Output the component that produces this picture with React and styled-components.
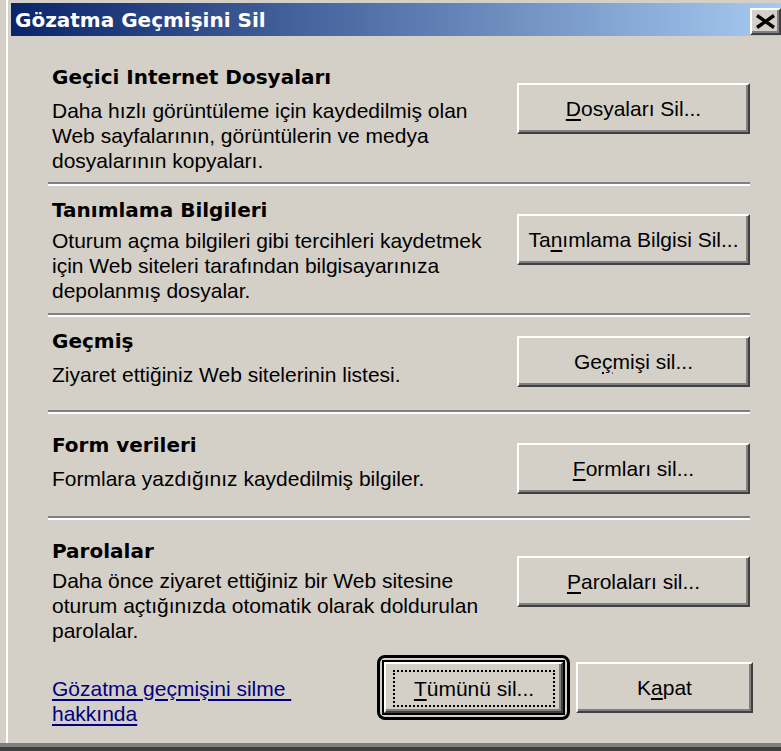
import React from 'react';
import styled, { createGlobalStyle } from 'styled-components';

const FACE = '#d4d0c8';
const BODY_FONT = `"Liberation Sans", Arial, sans-serif`;
const BOLD_FONT = `"DejaVu Sans", Verdana, sans-serif`;

const GlobalStyle = createGlobalStyle`
  html, body {
    margin: 0;
    padding: 0;
    background: ${FACE};
    overflow: hidden;
  }
  #root {
    width: 781px;
    height: 751px;
  }
`;

const Window = styled.div`
  box-sizing: border-box;
  width: 781px;
  height: 751px;
  display: flex;
  flex-direction: column;
  padding: 3px 0 8px 11px;
  background: ${FACE};
  box-shadow:
    inset 0 -4px 0 #404040,
    inset 0 -8px 0 #808080,
    inset 6px 0 0 ${FACE},
    inset 8px 0 0 #ffffff;
`;

const TitleBar = styled.div`
  flex: none;
  height: 33px;
  display: flex;
  align-items: center;
  justify-content: space-between;
  padding-left: 4px;
  background: linear-gradient(to right, #0a246a, #a6caf0);
`;

const Title = styled.span`
  color: #ffffff;
  font: bold 20px/1 ${BOLD_FONT};
  white-space: nowrap;
`;

const bevel = `
  background: ${FACE};
  border: 2px solid;
  border-color: #ffffff #404040 #404040 #ffffff;
  box-shadow: inset -2px -2px 0 #808080;
`;

const CloseButton = styled.button`
  ${bevel}
  box-sizing: border-box;
  align-self: flex-start;
  margin-top: 5px;
  width: 31px;
  height: 27px;
  padding: 0;
  display: flex;
  align-items: center;
  justify-content: center;
`;

const Content = styled.div`
  flex: 1;
  display: flex;
  flex-direction: column;
  padding: 0 31px 0 37px;
`;

const Section = styled.section`
  box-sizing: border-box;
  height: ${(p) => p.$h}px;
  padding-top: ${(p) => p.$pad}px;
  display: grid;
  grid-template-columns: 1fr 233px;
  align-items: start;
`;

const TextBlock = styled.div`
  padding-left: 4px;
`;

const Heading = styled.h2`
  margin: 0;
  font: bold 20px/25px ${BOLD_FONT};
  color: #000000;
  white-space: nowrap;
`;

const Description = styled.p`
  margin: ${(p) => p.$gap}px 0 0;
  font: 21px/25px ${BODY_FONT};
  color: #000000;
  white-space: nowrap;
`;

const Separator = styled.hr`
  flex: none;
  margin: 0;
  height: 0;
  border: none;
  border-top: 2px solid #808080;
  border-bottom: 2px solid #ffffff;
`;

const ActionButton = styled.button`
  ${bevel}
  box-sizing: border-box;
  margin-top: ${(p) => p.$offset || 0}px;
  width: ${(p) => p.$w || 233}px;
  height: 51px;
  padding: 0;
  display: flex;
  align-items: center;
  justify-content: center;
  font: 21px/25px ${BODY_FONT};
  color: #000000;
  white-space: nowrap;
`;

const Key = styled.span`
  text-decoration: underline;
  text-underline-offset: 3px;
  text-decoration-thickness: 2px;
`;

const Footer = styled.div`
  flex: none;
  display: flex;
  align-items: flex-start;
  justify-content: space-between;
  padding-left: 4px;
  margin-right: -3px;
`;

const HelpLink = styled.a`
  margin-top: 21px;
  font: 21px/25px ${BODY_FONT};
  color: #000080;
  text-decoration: underline;
  text-underline-offset: 3px;
  cursor: pointer;
`;

const FooterButtons = styled.div`
  display: flex;
  align-items: center;
  gap: 6px;
`;

const DefaultFrame = styled.div`
  border: 3px solid #000000;
  border-radius: 8px;
  padding: 4px;
  display: flex;
`;

const DefaultButton = styled(ActionButton)`
  align-items: stretch;
  box-shadow: inset -2px -2px 0 #808080, 0 0 0 2px #000000;
`;

const FocusRing = styled.span`
  flex: 1;
  margin: 6px 6px 4px 7px;
  border: 2px dotted #000000;
  display: flex;
  align-items: center;
  justify-content: center;
`;

const sections = [
  {
    h: 146, pad: 29, gap: 8, offset: 18,
    title: 'Geçici Internet Dosyaları',
    lines: [
      'Daha hızlı görüntüleme için kaydedilmiş olan',
      'Web sayfalarının, görüntülerin ve medya',
      'dosyalarının kopyaları.',
    ],
    label: [['D'], 'osyaları Sil...'],
  },
  {
    h: 127, pad: 12, gap: 5, offset: 16,
    title: 'Tanımlama Bilgileri',
    lines: [
      'Oturum açma bilgileri gibi tercihleri kaydetmek',
      'için Web siteleri tarafından bilgisayarınıza',
      'depolanmış dosyalar.',
    ],
    label: ['Ta', ['n'], 'ımlama Bilgisi Sil...'],
  },
  {
    h: 93, pad: 12, gap: 8, offset: 7,
    title: 'Geçmiş',
    lines: ['Ziyaret ettiğiniz Web sitelerinin listesi.'],
    label: ['Ge', ['ç'], 'mişi sil...'],
  },
  {
    h: 102, pad: 19, gap: 8, offset: 10,
    title: 'Form verileri',
    lines: ['Formlara yazdığınız kaydedilmiş bilgiler.'],
    label: [['F'], 'ormları sil...'],
  },
  {
    h: 135, pad: 19, gap: 4, offset: 17,
    title: 'Parolalar',
    lines: [
      'Daha önce ziyaret ettiğiniz bir Web sitesine',
      'oturum açtığınızda otomatik olarak doldurulan',
      'parolalar.',
    ],
    label: [['P'], 'arolaları sil...'],
  },
];

function Label({ parts }) {
  return parts.map((part, i) =>
    Array.isArray(part) ? <Key key={i}>{part[0]}</Key> : <span key={i}>{part}</span>
  );
}

function CloseIcon() {
  return (
    <svg width="21" height="15" viewBox="0 0 21 15" aria-hidden="true">
      <path d="M2 1.5 L19 13.5 M19 1.5 L2 13.5" stroke="#000" strokeWidth="3.4" fill="none" />
    </svg>
  );
}

export default function App() {
  return (
    <>
      <GlobalStyle />
      <Window>
        <TitleBar>
          <Title>Gözatma Geçmişini Sil</Title>
          <CloseButton aria-label="Kapat">
            <CloseIcon />
          </CloseButton>
        </TitleBar>
        <Content>
          {sections.map((s, i) => (
            <React.Fragment key={s.title}>
              <Section $h={s.h} $pad={s.pad}>
                <TextBlock>
                  <Heading>{s.title}</Heading>
                  <Description $gap={s.gap}>
                    {s.lines.map((line, j) => (
                      <React.Fragment key={j}>
                        {j > 0 && <br />}
                        {line}
                      </React.Fragment>
                    ))}
                  </Description>
                </TextBlock>
                <ActionButton $offset={s.offset}>
                  <Label parts={s.label} />
                </ActionButton>
              </Section>
              {i < sections.length - 1 && <Separator />}
            </React.Fragment>
          ))}
          <Footer>
            <HelpLink>
              Gözatma geçmişini silme&nbsp;
              <br />
              hakkında
            </HelpLink>
            <FooterButtons>
              <DefaultFrame>
                <DefaultButton $w={179}>
                  <FocusRing>
                    <Label parts={[['T'], 'ümünü sil...']} />
                  </FocusRing>
                </DefaultButton>
              </DefaultFrame>
              <ActionButton $w={177}>
                <Label parts={['K', ['a'], 'pat']} />
              </ActionButton>
            </FooterButtons>
          </Footer>
        </Content>
      </Window>
    </>
  );
}
